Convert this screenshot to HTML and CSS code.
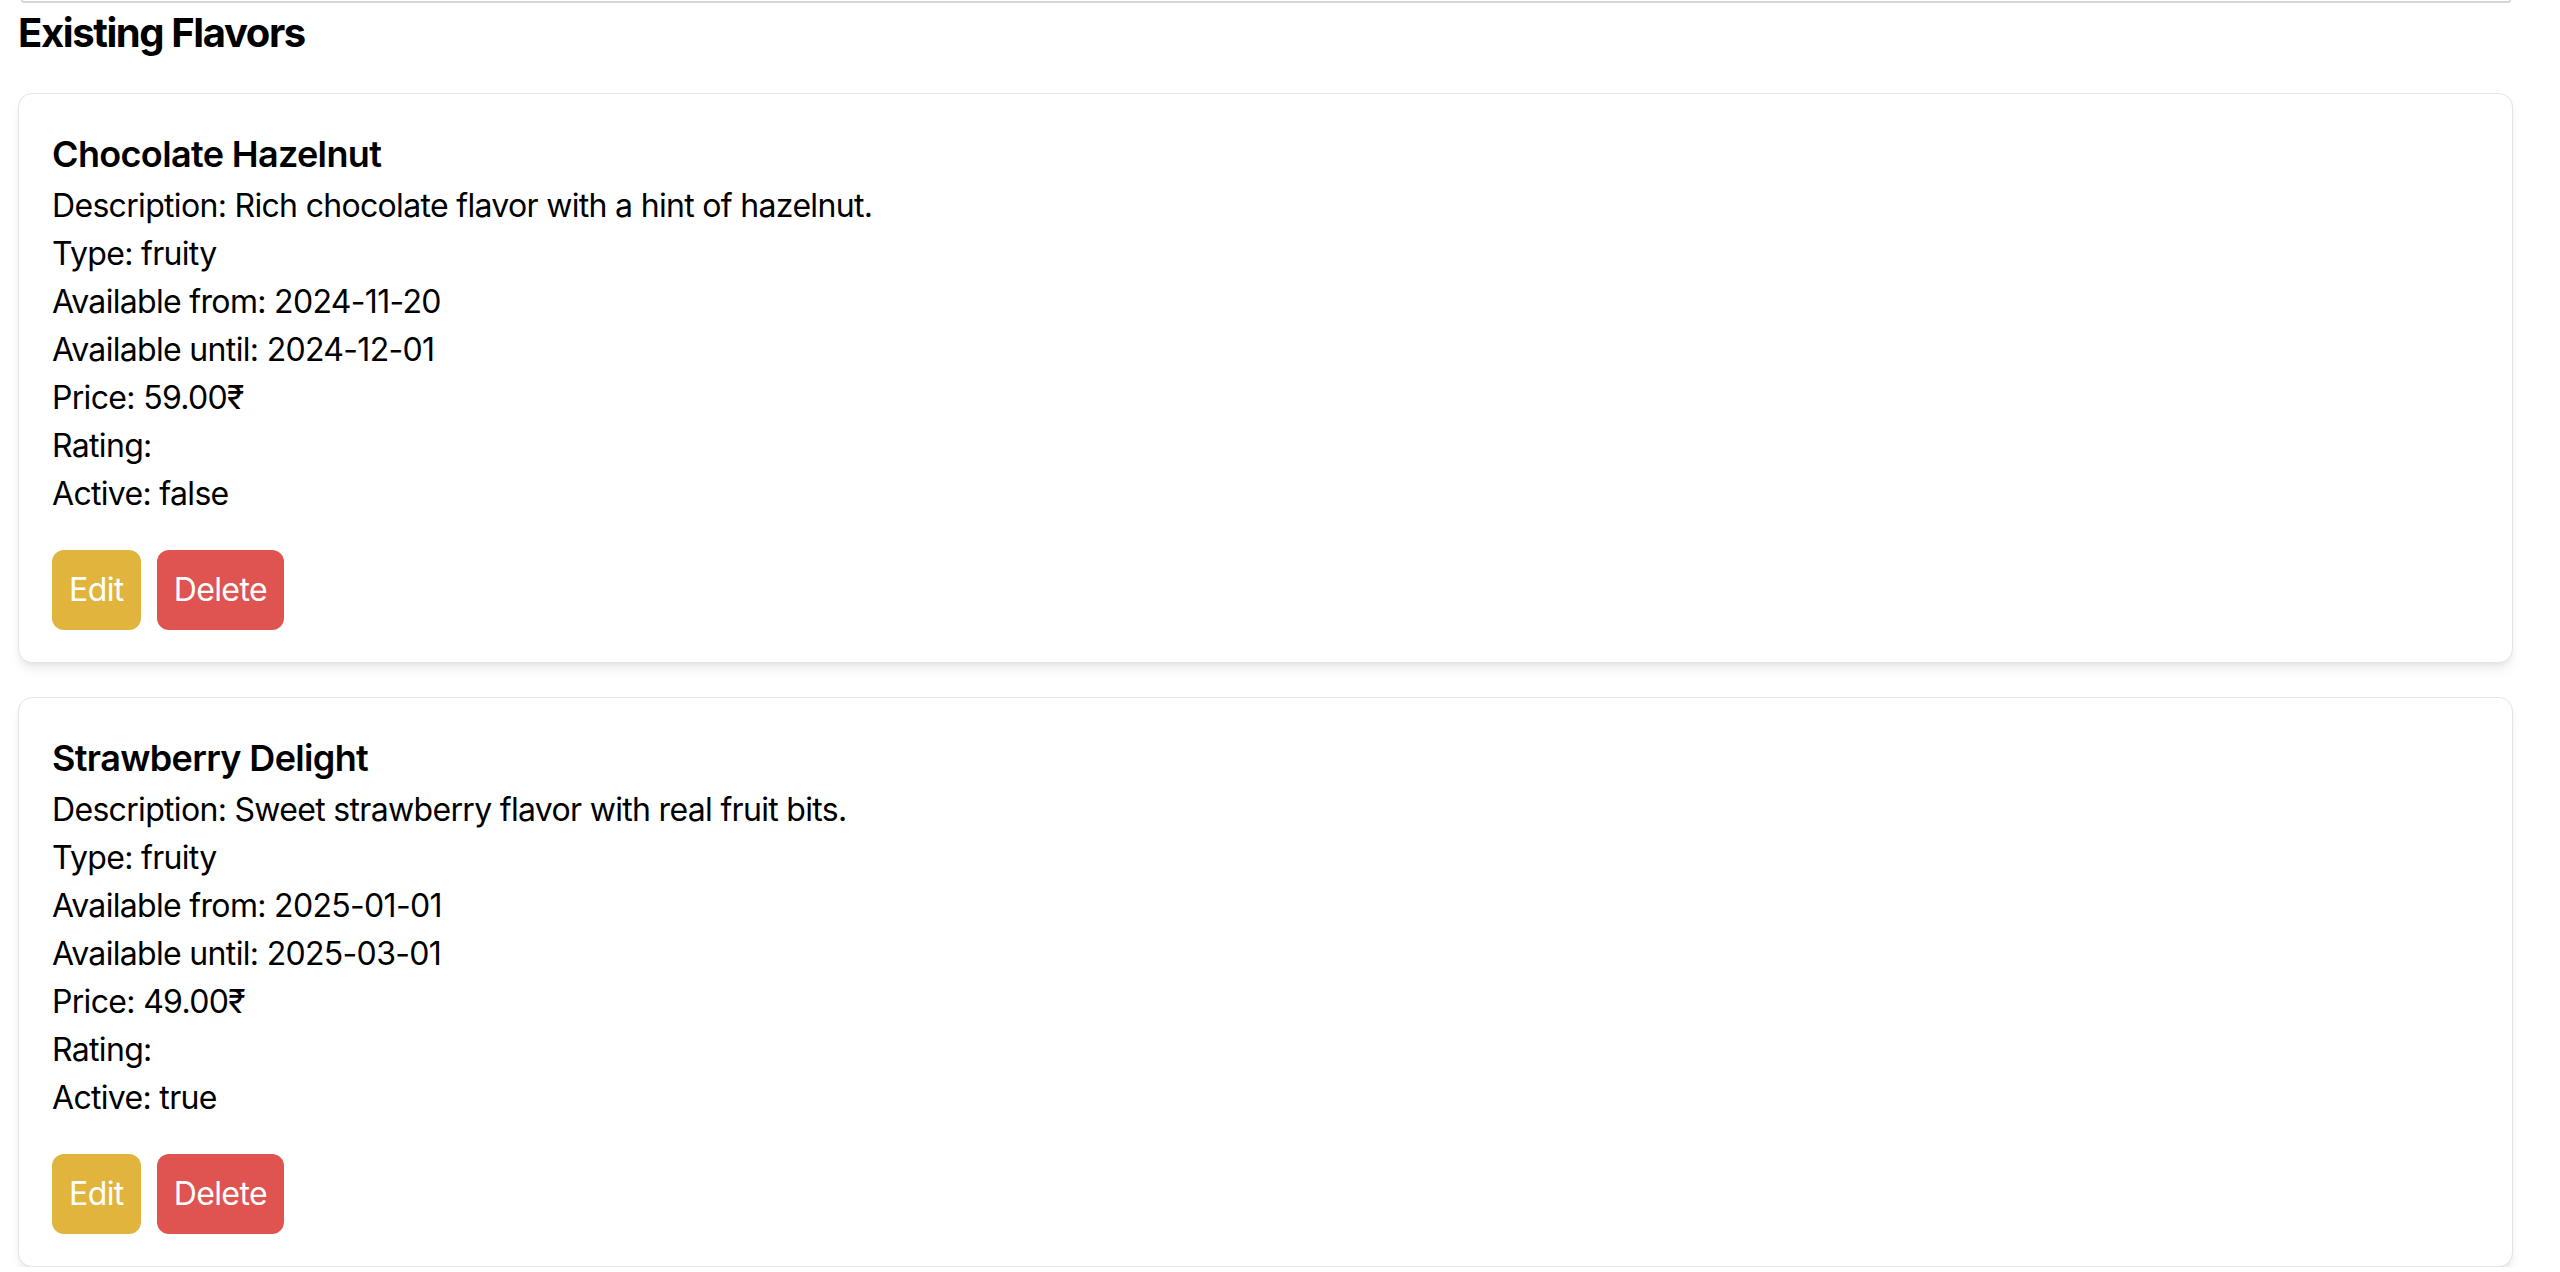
FILE: index.html
```html
<!DOCTYPE html>
<html lang="en">
<head>
<meta charset="utf-8">
<title>Existing Flavors</title>
<link rel="stylesheet" href="styles.css">
</head>
<body>
<div class="page">
  <div class="form-tail"></div>
  <h2 class="section-title">Existing Flavors</h2>
  <div class="flavor-list">
    <div class="flavor-card">
      <h3 class="flavor-name">Chocolate Hazelnut</h3>
      <p class="flavor-line">Description: Rich chocolate flavor with a hint of hazelnut.</p>
      <p class="flavor-line">Type: fruity</p>
      <p class="flavor-line">Available from: 2024-11-20</p>
      <p class="flavor-line">Available until: 2024-12-01</p>
      <p class="flavor-line">Price: 59.00₹</p>
      <p class="flavor-line">Rating: </p>
      <p class="flavor-line">Active: false</p>
      <div class="actions">
        <button class="btn btn-edit">Edit</button>
        <button class="btn btn-delete">Delete</button>
      </div>
    </div>
    <div class="flavor-card">
      <h3 class="flavor-name">Strawberry Delight</h3>
      <p class="flavor-line">Description: Sweet strawberry flavor with real fruit bits.</p>
      <p class="flavor-line">Type: fruity</p>
      <p class="flavor-line">Available from: 2025-01-01</p>
      <p class="flavor-line">Available until: 2025-03-01</p>
      <p class="flavor-line">Price: 49.00₹</p>
      <p class="flavor-line">Rating: </p>
      <p class="flavor-line">Active: true</p>
      <div class="actions">
        <button class="btn btn-edit">Edit</button>
        <button class="btn btn-delete">Delete</button>
      </div>
    </div>
  </div>
</div>
</body>
</html>
```
FILE: styles.css
```css
* { box-sizing: border-box; }
html, body { margin: 0; padding: 0; background: #ffffff; }
body {
  font-family: Inter, "Noto Sans", "Liberation Sans", sans-serif;
  color: #000;
  overflow: hidden;
}
.page {
  padding: 0 47px 0 18px;
}
.form-tail {
  height: 3px;
  margin: 0 2px 0 3px;
  border: 2px solid #d4d7dc;
  border-top: none;
  border-radius: 0 0 12px 12px;
}
.section-title {
  margin: 2px 0 32px 0;
  font-size: 40px;
  line-height: 56px;
  font-weight: 700;
  letter-spacing: -1.4px;
}
.flavor-list {
  display: flex;
  flex-direction: column;
  gap: 34px;
}
.flavor-card {
  border: 1px solid #e3e4e8;
  border-radius: 14px;
  padding: 32px 33px;
  background: #fff;
  box-shadow: 0 8px 12px -2px rgba(0,0,0,0.08), 0 3px 6px -3px rgba(0,0,0,0.08);
}
.flavor-name {
  margin: 0;
  font-size: 36px;
  line-height: 56px;
  font-weight: 600;
  letter-spacing: -0.65px;
}
.flavor-line {
  margin: 0;
  font-size: 32px;
  line-height: 48px;
  letter-spacing: -0.68px;
}
.actions {
  display: flex;
  gap: 16px;
  margin-top: 32px;
}
.btn {
  border: none;
  border-radius: 12px;
  padding: 16px 17px;
  font-family: inherit;
  font-size: 32px;
  line-height: 48px;
  color: #fff;
  letter-spacing: -0.6px;
  cursor: pointer;
}
.btn-edit { background: #e1b43e; }
.btn-delete { background: #df5350; }
```
